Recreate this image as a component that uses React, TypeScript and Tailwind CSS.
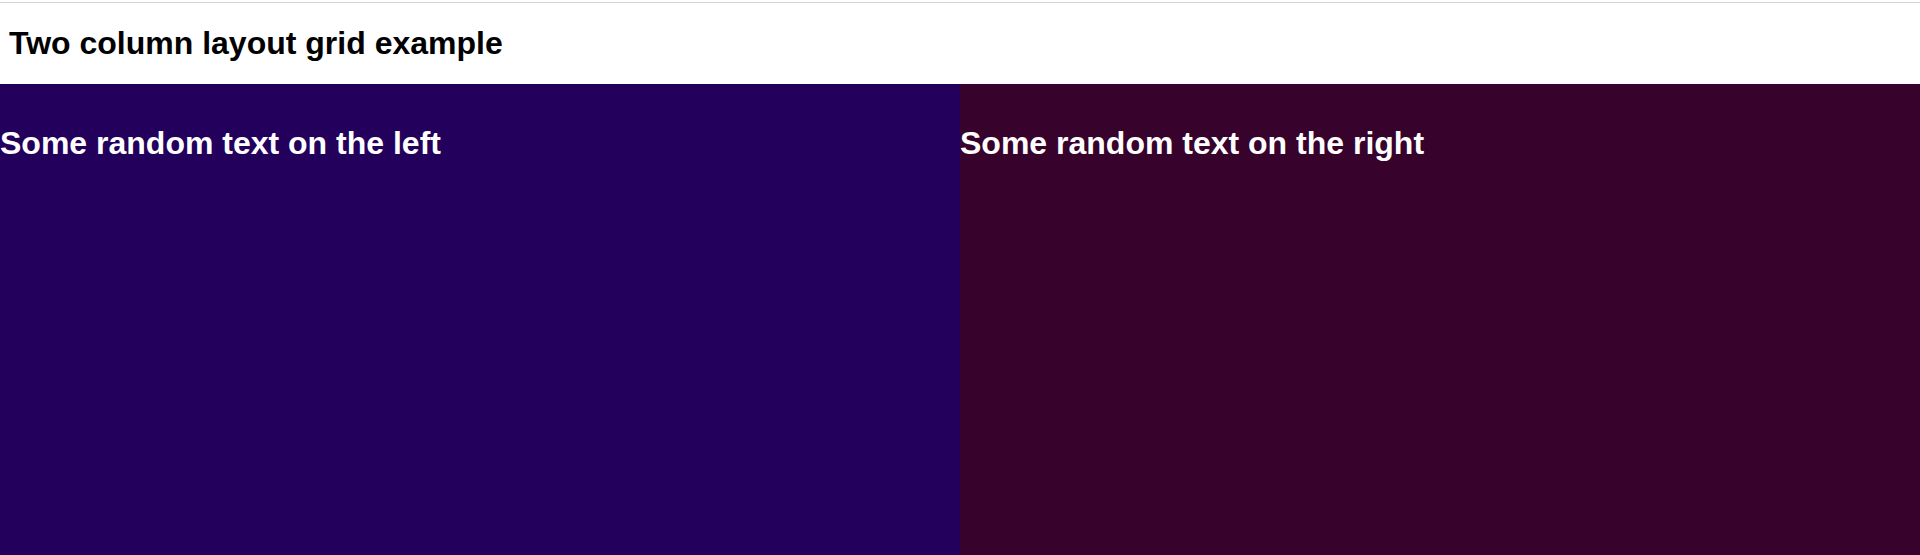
const App = () => {
  return (
    <div className="min-h-[555px] flex flex-col bg-white font-['Liberation_Sans',Arial,sans-serif]">
      <div className="pt-[2px]">
        <div className="h-px bg-[#d3d3d3]" />
      </div>
      <header className="h-[81px] pt-[22px] pl-[9px]">
        <h1 className="text-[32px] leading-[37px] font-bold text-black">
          Two column layout grid example
        </h1>
      </header>
      <div className="grid grid-cols-2 flex-1">
        <div className="bg-[#23005c] pt-[41px]">
          <h2 className="text-[32px] leading-[37px] font-bold text-white">
            Some random text on the left
          </h2>
        </div>
        <div className="bg-[#37022b] pt-[41px]">
          <h2 className="text-[32px] leading-[37px] font-bold text-white">
            Some random text on the right
          </h2>
        </div>
      </div>
    </div>
  );
};

export default App;
